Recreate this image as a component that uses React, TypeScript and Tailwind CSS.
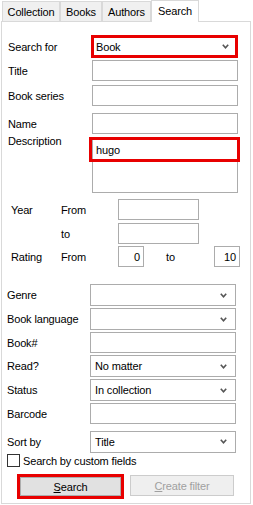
import React from 'react';

const RED = 'border-[#e80000]';

function Chevron() {
  return (
    <svg width="7" height="5" viewBox="0 0 7 5" className="shrink-0">
      <path d="M0.8 0.8 L3.5 3.8 L6.2 0.8" fill="none" stroke="#555" strokeWidth="1.6" />
    </svg>
  );
}

function Select({ value, w = 'w-[146px]' }: { value?: string; w?: string }) {
  return (
    <div className={`${w} h-[22px] border border-[#acacac] bg-white flex items-center justify-between pl-[4px] pr-[8px]`}>
      <span>{value}</span>
      <Chevron />
    </div>
  );
}

function Input({ w = 'w-[146px]', h = 'h-[21px]', children }: { w?: string; h?: string; children?: React.ReactNode }) {
  return <div className={`${w} ${h} border border-[#acacac] bg-white flex items-center justify-end pr-[3px]`}>{children}</div>;
}

export default function App() {
  return (
    <div className="w-[253px] h-[505px] bg-white text-black text-[11px] tracking-[-0.15px] leading-[14px] overflow-hidden" style={{ fontFamily: '"Liberation Sans", Arial, sans-serif' }}>
      {/* tabs */}
      <div className="h-[21px] flex items-end pl-[2px]">
        <div className="w-[58px] h-[20px] border border-b-0 border-[#d9d9d9] bg-[#f0f0f0] flex items-center justify-center">Collection</div>
        <div className="w-[42px] h-[20px] border border-b-0 border-[#d9d9d9] bg-[#f0f0f0] flex items-center justify-center">Books</div>
        <div className="w-[49px] h-[20px] border border-b-0 border-[#d9d9d9] bg-[#f0f0f0] flex items-center justify-center">Authors</div>
        <div className="relative z-10 -mb-px w-[48px] h-[22px] border border-b-0 border-[#d9d9d9] bg-white flex items-start justify-center pt-[3px]">Search</div>
      </div>

      {/* panel */}
      <div className="ml-[1px] w-[250px] h-[483px] border border-[#d9d9d9] flex flex-col">
        <div className="mt-[13px] h-[23px] flex items-center">
          <span className="ml-[6px] w-[83px]">Search for</span>
          <div className={`w-[147px] h-[23px] border-[3px] ${RED} flex items-center justify-between pl-[2px] pr-[6px]`}>
            <span>Book</span>
            <Chevron />
          </div>
        </div>

        <div className="mt-[2px] h-[21px] flex items-center">
          <span className="ml-[6px] w-[84px]">Title</span>
          <Input />
        </div>
        <div className="mt-[4px] h-[21px] flex items-center">
          <span className="ml-[6px] w-[84px]">Book series</span>
          <Input />
        </div>
        <div className="mt-[7px] h-[21px] flex items-center">
          <span className="ml-[6px] w-[84px]">Name</span>
          <Input />
        </div>
        <div className="mt-[3px] flex items-start">
          <span className="ml-[6px] w-[84px] -mt-[3px]">Description</span>
          <div className="relative w-[146px] h-[56px] border border-[#acacac] bg-white">
            <div className={`absolute -left-[4px] -top-px w-[151px] h-[25px] border-[3px] ${RED} flex items-center pl-[4px]`}>hugo</div>
          </div>
        </div>

        <div className="mt-[6px] h-[21px] flex items-center">
          <span className="ml-[9px] w-[50px]">Year</span>
          <span className="w-[57px]">From</span>
          <Input w="w-[81px]" />
        </div>
        <div className="mt-[3px] h-[21px] flex items-center">
          <span className="ml-[59px] w-[57px]">to</span>
          <Input w="w-[81px]" />
        </div>
        <div className="mt-[2px] h-[21px] flex items-center">
          <span className="ml-[9px] w-[50px]">Rating</span>
          <span className="w-[57px]">From</span>
          <Input w="w-[26px]">0</Input>
          <span className="ml-[22px] w-[48px]">to</span>
          <Input w="w-[26px]">10</Input>
        </div>

        <div className="mt-[17px] h-[22px] flex items-center">
          <span className="ml-[5px] w-[83px]">Genre</span>
          <Select />
        </div>
        <div className="mt-[2px] h-[22px] flex items-center">
          <span className="ml-[5px] w-[83px]">Book language</span>
          <Select />
        </div>
        <div className="mt-[2px] h-[21px] flex items-center">
          <span className="ml-[5px] w-[83px]">Book#</span>
          <Input />
        </div>
        <div className="mt-[2px] h-[22px] flex items-center">
          <span className="ml-[5px] w-[83px]">Read?</span>
          <Select value="No matter" />
        </div>
        <div className="mt-[2px] h-[22px] flex items-center">
          <span className="ml-[5px] w-[83px]">Status</span>
          <Select value="In collection" />
        </div>
        <div className="mt-[2px] h-[21px] flex items-center">
          <span className="ml-[5px] w-[83px]">Barcode</span>
          <Input />
        </div>
        <div className="mt-[7px] h-[21px] flex items-center">
          <span className="ml-[5px] w-[83px]">Sort by</span>
          <Select value="Title" />
        </div>

        <div className="mt-[2px] h-[13px] flex items-center">
          <div className="ml-[5px] w-[13px] h-[13px] border border-[#333] bg-white" />
          <span className="ml-[3px]">Search by custom fields</span>
        </div>

        <div className="mt-[7px] flex items-start">
          <div className={`ml-[15px] w-[107px] h-[25px] border-[3px] ${RED}`}>
            <div className="w-full h-full border border-[#adadad] bg-[#e1e1e1] flex items-center justify-center">
              <span><span className="underline">S</span>earch</span>
            </div>
          </div>
          <div className="mt-[1px] ml-[6px] w-[104px] h-[21px] border border-[#cccccc] bg-[#efefef] text-[#a0a0a0] flex items-center justify-center">
            <span><span className="underline">C</span>reate filter</span>
          </div>
        </div>
      </div>
    </div>
  );
}
